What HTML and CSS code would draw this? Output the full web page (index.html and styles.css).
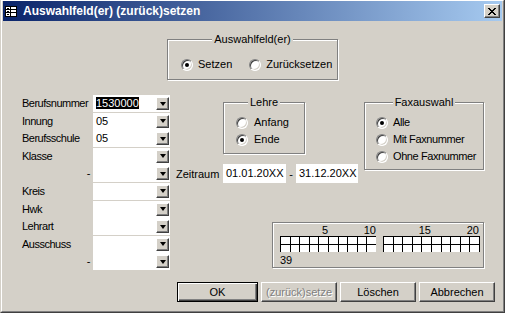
FILE: index.html
```html
<!DOCTYPE html>
<html>
<head>
    <title>Auswahlfeld(er) (zurück)setzen</title>
    <link rel="stylesheet" href="styles.css">
</head>
<body>
    <div class="window">
        <div class="frame">
            <div class="titlebar">
                <svg class="title-icon" width="12" height="11" viewBox="0 0 12 11" shape-rendering="crispEdges">
                    <rect x="0.5" y="0.5" width="11" height="10" fill="#fff" stroke="#000"/>
                    <path d="M1 3.5h10M1 6.5h10M5.5 1v9" stroke="#000"/>
                    <path d="M2 2h2v1H2zM2 5h2v1H2zM2 8h2v1H2z" fill="#000"/>
                </svg>
                <span class="title-text">Auswahlfeld(er) (zurück)setzen</span>
                <span class="close-btn">
                    <svg width="8" height="7" viewBox="0 0 8 7" shape-rendering="crispEdges">
                        <path d="M0 0h2v1H0zM6 0h2v1H6zM1 1h2v1H1zM5 1h2v1H5zM2 2h4v1H2zM3 3h2v1H3zM2 4h4v1H2zM1 5h2v1H1zM5 5h2v1H5zM0 6h2v1H0zM6 6h2v1H6z" fill="#000"/>
                    </svg>
                </span>
            </div>

            <div class="client">
                <div class="group group-auswahl">
                    <div class="group-title">Auswahlfeld(er)</div>
                    <div class="opts-row">
                        <div class="opt"><span class="radio on"></span>Setzen</div>
                        <div class="opt"><span class="radio"></span>Zurücksetzen</div>
                    </div>
                </div>

                <div class="main">
                    <div class="fields">
                        <span class="lbl">Berufsnummer</span>
                        <div class="combo"><span class="val"><span class="sel">1530000</span></span><span class="drop"></span></div>
                        <span class="lbl">Innung</span>
                        <div class="combo"><span class="val">05</span><span class="drop"></span></div>
                        <span class="lbl">Berufsschule</span>
                        <div class="combo"><span class="val">05</span><span class="drop"></span></div>
                        <span class="lbl">Klasse</span>
                        <div class="combo"><span class="val"></span><span class="drop"></span></div>
                        <span class="lbl dash">-</span>
                        <div class="combo"><span class="val"></span><span class="drop"></span></div>
                        <span class="lbl">Kreis</span>
                        <div class="combo"><span class="val"></span><span class="drop"></span></div>
                        <span class="lbl">Hwk</span>
                        <div class="combo"><span class="val"></span><span class="drop"></span></div>
                        <span class="lbl">Lehrart</span>
                        <div class="combo"><span class="val"></span><span class="drop"></span></div>
                        <span class="lbl">Ausschuss</span>
                        <div class="combo"><span class="val"></span><span class="drop"></span></div>
                        <span class="lbl dash">-</span>
                        <div class="combo"><span class="val"></span><span class="drop"></span></div>
                    </div>

                    <div class="right">
                        <div class="group group-lehre">
                            <div class="group-title">Lehre</div>
                            <div class="opts-col">
                                <div class="opt"><span class="radio"></span>Anfang</div>
                                <div class="opt"><span class="radio on"></span>Ende</div>
                            </div>
                        </div>

                        <div class="group group-fax">
                            <div class="group-title">Faxauswahl</div>
                            <div class="opts-col">
                                <div class="opt"><span class="radio on"></span>Alle</div>
                                <div class="opt"><span class="radio"></span>Mit Faxnummer</div>
                                <div class="opt"><span class="radio"></span>Ohne Faxnummer</div>
                            </div>
                        </div>

                        <div class="zeitraum">
                            <span class="zr-label">Zeitraum</span>
                            <span class="textbox">01.01.20XX</span>
                            <span class="zr-dash">-</span>
                            <span class="textbox tb-end">31.12.20XX</span>
                        </div>

                        <div class="ruler">
                            <div class="ruler-blocks">
                                <div class="block">
                                    <div class="nums"><span>5</span><span>10</span></div>
                                    <svg width="97" height="16" viewBox="0 0 97 16" shape-rendering="crispEdges">
                                        <rect x="0" y="0" width="96" height="16" fill="#fff"/>
                                        <path d="M0 0.5h96M0 8.5h96M0.5 0v16M10.5 0v16M19.5 0v16M29.5 0v16M38.5 0v16M48.5 0v16M58.5 0v16M67.5 0v16M77.5 0v16M86.5 0v16" stroke="#000"/>
                                    </svg>
                                </div>
                                <div class="block">
                                    <div class="nums"><span>15</span><span>20</span></div>
                                    <svg width="97" height="16" viewBox="0 0 97 16" shape-rendering="crispEdges">
                                        <rect x="0" y="0" width="97" height="16" fill="#fff"/>
                                        <path d="M0 0.5h97M0 8.5h97M0.5 0v16M10.5 0v16M19.5 0v16M29.5 0v16M38.5 0v16M48.5 0v16M58.5 0v16M67.5 0v16M77.5 0v16M86.5 0v16M96.5 0v16" stroke="#000"/>
                                    </svg>
                                </div>
                            </div>
                            <div class="ruler-count">39</div>
                        </div>
                    </div>
                </div>

                <div class="buttons">
                    <button class="btn default">OK</button>
                    <button class="btn disabled">(zurück)setze</button>
                    <button class="btn">Löschen</button>
                    <button class="btn">Abbrechen</button>
                </div>
            </div>
        </div>
    </div>
</body>
</html>
```

FILE: styles.css
```css
html, body {
    margin: 0;
    padding: 0;
    background: #d4d0c8;
    overflow: hidden;
}
body {
    font-family: "Liberation Sans", Arial, sans-serif;
    font-size: 11px;
    color: #000;
}
.window {
    width: 505px;
    height: 313px;
    box-sizing: border-box;
    background: #d4d0c8;
    border-style: solid;
    border-width: 0 1px 1px 1px;
    border-color: #d4d0c8 #404040 #404040 #d4d0c8;
}
.frame {
    height: 100%;
    box-sizing: border-box;
    border: 1px solid;
    border-color: #fff #808080 #808080 #fff;
    padding: 0 1px 1px 1px;
    display: flex;
    flex-direction: column;
}

/* title bar */
.titlebar {
    height: 20px;
    flex: none;
    display: flex;
    align-items: center;
    background: linear-gradient(to right, #0a246a, #a6caf0);
    color: #fff;
}
.title-icon {
    margin: 1px 0 0 2px;
}
.title-text {
    margin-left: 6px;
    font-weight: bold;
    font-size: 12px;
    line-height: 14px;
}
.close-btn {
    margin-left: auto;
    margin-right: 2px;
    width: 16px;
    height: 14px;
    box-sizing: border-box;
    background: #d4d0c8;
    border: 1px solid;
    border-color: #fff #404040 #404040 #fff;
    box-shadow: inset -1px -1px #808080;
    display: flex;
    align-items: center;
    justify-content: center;
}

/* client area */
.client {
    flex: 1;
    display: flex;
    flex-direction: column;
}

/* etched group boxes */
.group {
    box-sizing: border-box;
    border: 1px solid #808080;
    box-shadow: inset 1px 1px #fff, 1px 1px #fff;
}
.group-title {
    width: fit-content;
    margin: -7px auto 0;
    padding: 0 2px;
    background: #d4d0c8;
    line-height: 13px;
}
.group-auswahl {
    align-self: center;
    margin-top: 18px;
    width: 171px;
    height: 41px;
}
.opts-row {
    display: flex;
    gap: 17px;
    margin-top: 12px;
    padding-left: 13px;
}
.opts-col {
    display: flex;
    flex-direction: column;
    margin-top: 5px;
}
.opts-col .opt {
    height: 17px;
}
.opt {
    display: flex;
    align-items: center;
    gap: 5px;
    line-height: 13px;
    white-space: nowrap;
}
.radio {
    width: 12px;
    height: 12px;
    box-sizing: border-box;
    border-radius: 50%;
    background: #fff;
    border: 1px solid;
    border-color: #808080 #fff #fff #808080;
    box-shadow: inset 1px 1px #404040, inset -1px -1px #d4d0c8;
    display: flex;
    align-items: center;
    justify-content: center;
}
.radio.on::after {
    content: "";
    width: 4px;
    height: 4px;
    border-radius: 50%;
    background: #000;
}

/* main area */
.main {
    display: flex;
    align-items: flex-start;
    padding-left: 19px;
}
.fields {
    margin-top: 15px;
    display: grid;
    grid-template-columns: 71px 77px;
    grid-auto-rows: 17.6px;
    align-items: start;
}
.lbl {
    line-height: 17px;
    white-space: nowrap;
    letter-spacing: -0.5px;
}
.lbl.dash {
    text-align: right;
    padding-right: 3px;
}
.combo {
    height: 17px;
    background: #fff;
    display: flex;
    align-items: center;
    padding-right: 1px;
}
.val {
    flex: 1;
    padding-left: 3px;
    line-height: 13px;
    overflow: hidden;
    white-space: nowrap;
}
.sel {
    background: #000;
    color: #fff;
}
.drop {
    width: 13px;
    height: 13px;
    box-sizing: border-box;
    background: #d4d0c8;
    border: 1px solid;
    border-color: #fff #404040 #404040 #fff;
    box-shadow: inset -1px -1px #808080;
    display: flex;
    align-items: center;
    justify-content: center;
}
.drop::after {
    content: "";
    width: 0;
    height: 0;
    border-left: 3.5px solid transparent;
    border-right: 3.5px solid transparent;
    border-top: 4px solid #000;
}

.right {
    margin-top: 22px;
    margin-left: 6px;
    display: grid;
    grid-template-columns: 188px 120px;
    align-items: start;
}
.group-lehre {
    grid-column: 1;
    grid-row: 1;
    margin-left: 47px;
    width: 82px;
    height: 52px;
}
.group-lehre .opts-col {
    padding-left: 12px;
}
.group-lehre .opt {
    gap: 6px;
}
.group-fax {
    grid-column: 2;
    grid-row: 1 / span 2;
    width: 120px;
    height: 68px;
}
.group-fax .opts-col {
    padding-left: 11px;
}
.group-fax .opt {
    letter-spacing: -0.4px;
}

.zeitraum {
    grid-column: 1;
    grid-row: 2;
    margin-top: 10px;
    height: 19px;
    display: flex;
    align-items: center;
}
.zr-label {
    width: 47px;
}
.textbox {
    width: 63px;
    height: 19px;
    box-sizing: border-box;
    padding-left: 3px;
    background: #fff;
    line-height: 19px;
}
.textbox.tb-end {
    width: 62px;
}
.zr-dash {
    width: 10px;
    text-align: center;
}

.ruler {
    grid-column: 1 / span 2;
    grid-row: 3;
    justify-self: end;
    margin-top: 39px;
    width: 212px;
    height: 46px;
    box-sizing: border-box;
    border: 1px solid #808080;
    box-shadow: inset 1px 1px #fff, 1px 1px #fff;
    padding: 2px 0 0 7px;
}
.ruler-blocks {
    display: flex;
    gap: 6px;
}
.block svg {
    display: block;
}
.nums {
    display: grid;
    grid-template-columns: 48px 48px;
    height: 11px;
    line-height: 11px;
    text-align: right;
}
.ruler-count {
    margin-top: 2px;
    line-height: 13px;
}

/* buttons */
.buttons {
    margin-top: auto;
    display: flex;
    justify-content: flex-end;
    gap: 3px;
    padding: 0 7px 8px 0;
}
.btn {
    width: 76px;
    height: 20px;
    box-sizing: border-box;
    padding: 0;
    font: inherit;
    color: #000;
    background: #d4d0c8;
    border: 1px solid;
    border-color: #fff #404040 #404040 #fff;
    box-shadow: inset -1px -1px #808080;
}
.btn.default {
    width: 81px;
    border-color: #000;
    box-shadow: inset 1px 1px #fff, inset -1px -1px #404040, inset -2px -2px #808080;
}
.btn.disabled {
    color: #808080;
    text-shadow: 1px 1px #fff;
}
```
